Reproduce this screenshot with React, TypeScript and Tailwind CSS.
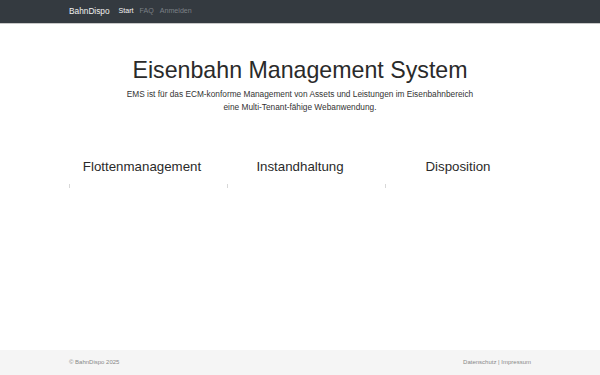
import React from "react";

export default function App() {
  const font = { fontFamily: '"Liberation Sans", Arial, sans-serif' };
  return (
    <div className="flex h-[375px] w-[600px] flex-col bg-white" style={font}>
      <nav className="h-[24px] shrink-0 border-b border-[#c8c8c8] bg-[#343a40]">
        <div className="mx-auto flex h-[23px] w-[462px] items-center">
          <span className="mr-[9px] text-[8.3px] text-[#f0f0f0]">BahnDispo</span>
          <span className="mr-[6px] text-[7.1px] text-[#f4f4f4]">Start</span>
          <span className="mr-[6px] text-[7.1px] text-[#7b8086]">FAQ</span>
          <span className="text-[7.1px] text-[#7b8086]">Anmelden</span>
        </div>
      </nav>
      <main className="flex-1">
        <div className="mx-auto w-[462px] pt-[32px] text-center">
          <h1 className="text-[23.2px] leading-[28px] text-[#2a2a2a]">Eisenbahn Management System</h1>
          <p className="mt-[4px] text-[8.3px] leading-[13px] text-[#333]">
            EMS ist für das ECM-konforme Management von Assets und Leistungen im Eisenbahnbereich
            <br />
            eine Multi-Tenant-fähige Webanwendung.
          </p>
        </div>
        <div className="mx-auto mt-[45px] grid w-[474px] grid-cols-3">
          {["Flottenmanagement", "Instandhaltung", "Disposition"].map((t) => (
            <div key={t} className="px-[6px]">
              <h2 className="text-center text-[13.3px] leading-[16px] text-[#2a2a2a]">{t}</h2>
              <div className="mt-[9px] h-[4px] w-[1px] bg-[#d8d8d8]" />
            </div>
          ))}
        </div>
      </main>
      <footer className="h-[25px] shrink-0 bg-[#f5f5f5]">
        <div className="mx-auto flex h-full w-[462px] items-center justify-between text-[6px] text-[#888]">
          <span>© BahnDispo 2025</span>
          <span>Datenschutz | Impressum</span>
        </div>
      </footer>
    </div>
  );
}
